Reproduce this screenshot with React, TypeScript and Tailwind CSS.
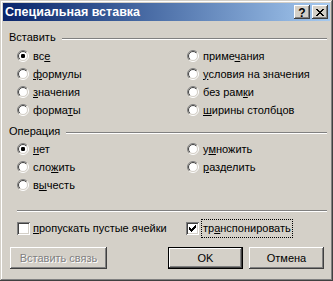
import { useId } from "react";

const raised =
  "shadow-[inset_-1px_-1px_#404040,inset_1px_1px_#ffffff,inset_-2px_-2px_#808080,inset_2px_2px_#d4d0c8]";
const sunken =
  "shadow-[inset_1px_1px_#808080,inset_-1px_-1px_#ffffff,inset_2px_2px_#404040,inset_-2px_-2px_#d4d0c8]";

function Radio({ checked = false }: { checked?: boolean }) {
  const id = useId();
  return (
    <svg width="12" height="12" viewBox="0 0 12 12" className="shrink-0">
      <defs>
        <linearGradient id={`${id}o`} x1="0" y1="0" x2="1" y2="1">
          <stop offset="0.5" stopColor="#808080" />
          <stop offset="0.5" stopColor="#ffffff" />
        </linearGradient>
        <linearGradient id={`${id}i`} x1="0" y1="0" x2="1" y2="1">
          <stop offset="0.5" stopColor="#404040" />
          <stop offset="0.5" stopColor="#d4d0c8" />
        </linearGradient>
      </defs>
      <circle cx="6" cy="6" r="5.5" fill="none" stroke={`url(#${id}o)`} />
      <circle cx="6" cy="6" r="4.5" fill="#ffffff" stroke={`url(#${id}i)`} />
      {checked && <rect x="4" y="4" width="4" height="4" rx="1.2" fill="#000" />}
    </svg>
  );
}

const checkPixels = [
  [6, 0], [5, 1], [6, 1], [0, 2], [4, 2], [5, 2], [6, 2],
  [0, 3], [1, 3], [3, 3], [4, 3], [5, 3], [0, 4], [1, 4], [2, 4], [3, 4], [4, 4],
  [1, 5], [2, 5], [3, 5], [2, 6],
];

function Checkbox({ checked = false }: { checked?: boolean }) {
  return (
    <div className={`relative h-[13px] w-[13px] shrink-0 bg-white ${sunken}`}>
      {checked && (
        <svg width="7" height="7" viewBox="0 0 7 7" className="absolute left-[3px] top-[3px]" shapeRendering="crispEdges">
          {checkPixels.map(([x, y]) => (
            <rect key={`${x}-${y}`} x={x} y={y} width="1" height="1" fill="#000" />
          ))}
        </svg>
      )}
    </div>
  );
}

const closePixels = [
  [0, 0], [1, 0], [6, 0], [7, 0], [1, 1], [2, 1], [5, 1], [6, 1],
  [2, 2], [3, 2], [4, 2], [5, 2], [3, 3], [4, 3],
  [2, 4], [3, 4], [4, 4], [5, 4], [1, 5], [2, 5], [5, 5], [6, 5],
  [0, 6], [1, 6], [6, 6], [7, 6],
];

// label with one underlined mnemonic letter
function Label({ pre, key_, post }: { pre: string; key_: string; post: string }) {
  return (
    <span className="whitespace-nowrap leading-[13px]">
      {pre}
      <span className="underline underline-offset-[1px]">{key_}</span>
      {post}
    </span>
  );
}

function Option({ checked, pre, k, post }: { checked?: boolean; pre: string; k: string; post: string }) {
  return (
    <div className="flex h-[18px] items-center gap-[4px]">
      <Radio checked={checked} />
      <Label pre={pre} key_={k} post={post} />
    </div>
  );
}

function GroupHeader({ title }: { title: string }) {
  return (
    <div className="flex h-[13px] items-center gap-[6px]">
      <span className="leading-[13px]">{title}</span>
      <div className="mt-[3px] h-0 flex-1 border-t border-b border-t-[#808080] border-b-white" />
    </div>
  );
}

export default function App() {
  return (
    <div
      className={`flex h-[281px] w-[333px] flex-col bg-[#d4d0c8] p-[3px] text-[11px] text-black shadow-[inset_-1px_-1px_#404040,inset_1px_1px_#d4d0c8,inset_-2px_-2px_#808080,inset_2px_2px_#ffffff]`}
      style={{ fontFamily: '"Liberation Sans", Arial, sans-serif' }}
    >
      {/* title bar */}
      <div className="flex h-[18px] items-center bg-gradient-to-r from-[#0a246a] to-[#a6caf0] pl-[2px] pr-[2px]">
        <span className="text-[12.5px] font-bold text-white">Специальная вставка</span>
        <div className="ml-auto flex gap-[2px]">
          <div className={`flex h-[14px] w-[16px] items-center justify-center bg-[#d4d0c8] ${raised}`}>
            <span className="mt-[1px] text-[12px] font-bold leading-none">?</span>
          </div>
          <div className={`flex h-[14px] w-[16px] items-center justify-center bg-[#d4d0c8] ${raised}`}>
            <svg width="8" height="7" viewBox="0 0 8 7" shapeRendering="crispEdges">
              {closePixels.map(([x, y]) => (
                <rect key={`${x}-${y}`} x={x} y={y} width="1" height="1" fill="#000" />
              ))}
            </svg>
          </div>
        </div>
      </div>

      <div className="flex flex-1 flex-col pl-[6px] pr-[3px]">
        <div className="mt-[10px]">
          <GroupHeader title="Вставить" />
        </div>
        <div className="mt-[3px] grid grid-cols-[170px_1fr] pl-[8px]">
          <Option checked pre="вс" k="е" post="" />
          <Option pre="приме" k="ч" post="ания" />
          <Option pre="" k="ф" post="ормулы" />
          <Option pre="" k="у" post="словия на значения" />
          <Option pre="" k="з" post="начения" />
          <Option pre="без рам" k="к" post="и" />
          <Option pre="форма" k="т" post="ы" />
          <Option pre="" k="ш" post="ирины столбцов" />
        </div>

        <div className="mt-[6px]">
          <GroupHeader title="Операция" />
        </div>
        <div className="mt-[2px] grid grid-cols-[170px_1fr] pl-[8px]">
          <Option checked pre="" k="н" post="ет" />
          <Option pre="у" k="м" post="ножить" />
          <Option pre="сло" k="ж" post="ить" />
          <Option pre="" k="р" post="азделить" />
          <Option pre="в" k="ы" post="честь" />
        </div>

        <div className="ml-[8px] mt-[16px] h-0 border-t border-b border-t-[#808080] border-b-white" />

        <div className="mt-[7px] grid h-[15px] grid-cols-[169px_1fr] items-center pl-[8px]">
          <div className="flex items-center gap-[3px]">
            <Checkbox />
            <Label pre="" key_="п" post="ропускать пустые ячейки" />
          </div>
          <div className="flex items-center gap-[2px]">
            <Checkbox checked />
            <div className="border border-dotted border-black px-[1px]">
              <Label pre="тр" key_="а" post="нспонировать" />
            </div>
          </div>
        </div>

        <div className="mt-[13px] flex items-center">
          <div className={`ml-[1px] flex h-[22px] w-[97px] items-center justify-center ${raised}`}>
            <span className="text-[#808080] [text-shadow:1px_1px_0_#ffffff]">Вставить связь</span>
          </div>
          <div className="flex-1" />
          <div className="h-[22px] w-[75px] border border-black">
            <div className={`flex h-full w-full items-center justify-center ${raised}`}>OK</div>
          </div>
          <div className={`ml-[6px] mr-[3px] flex h-[22px] w-[75px] items-center justify-center ${raised}`}>
            Отмена
          </div>
        </div>
      </div>
    </div>
  );
}
